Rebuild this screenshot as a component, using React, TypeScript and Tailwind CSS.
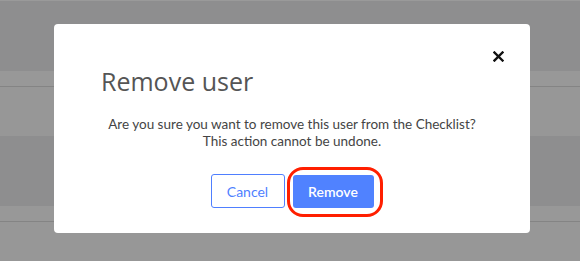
import React from "react";

const Backdrop = () => (
  <div className="flex flex-col w-full h-full">
    <div className="h-[71px] bg-[#8e8e8f] border-t border-[#9a9a9a]" />
    <div className="h-[15px] bg-[#989898]" />
    <div className="h-px bg-[#848484]" />
    <div className="h-[49px] bg-[#979797]" />
    <div className="h-[70px] bg-[#8e8e8f]" />
    <div className="h-[15px] bg-[#989898]" />
    <div className="h-px bg-[#848484]" />
    <div className="flex-1 bg-[#979797]" />
  </div>
);

const CloseIcon = () => (
  <svg width="11" height="11" viewBox="0 0 11 11" fill="none">
    <path d="M1.5 1.5 L9.5 9.5 M9.5 1.5 L1.5 9.5" stroke="#111" strokeWidth="2.4" strokeLinecap="square" />
  </svg>
);

export default function App() {
  return (
    <div className="relative w-[580px] h-[261px] overflow-hidden font-['Lato',sans-serif]">
      <Backdrop />

      <div className="absolute left-[54px] top-[24px] w-[476px] h-[209px] bg-white rounded-[4px] flex flex-col">
        <div className="flex justify-end pt-[27px] pr-[26px] h-[38px]">
          <button className="cursor-pointer">
            <CloseIcon />
          </button>
        </div>

        <h2 className="mt-[4px] pl-[47px] font-['Open_Sans',sans-serif] text-[25px] leading-[30px] text-[#555555]">
          Remove user
        </h2>

        <p className="mt-[20px] text-center text-[13.5px] leading-[17px] text-[#444444]">
          Are you sure you want to remove this user from the Checklist?
          <br />
          This action cannot be undone.
        </p>

        <div className="mt-[24px] flex justify-center gap-[8px]">
          <button className="w-[74px] h-[34px] rounded-[3px] border border-[#4f7fff] text-[#4f7fff] text-[14px]">
            Cancel
          </button>
          <div className="relative">
            <button className="w-[81px] h-[33px] mt-px rounded-[3px] bg-[#5082ff] text-white text-[14px] font-semibold">
              Remove
            </button>
            <div className="absolute left-[-6px] top-[-7px] w-[96px] h-[50px] rounded-[16px] border-[3px] border-[#ff1f00]" />
          </div>
        </div>
      </div>
    </div>
  );
}
